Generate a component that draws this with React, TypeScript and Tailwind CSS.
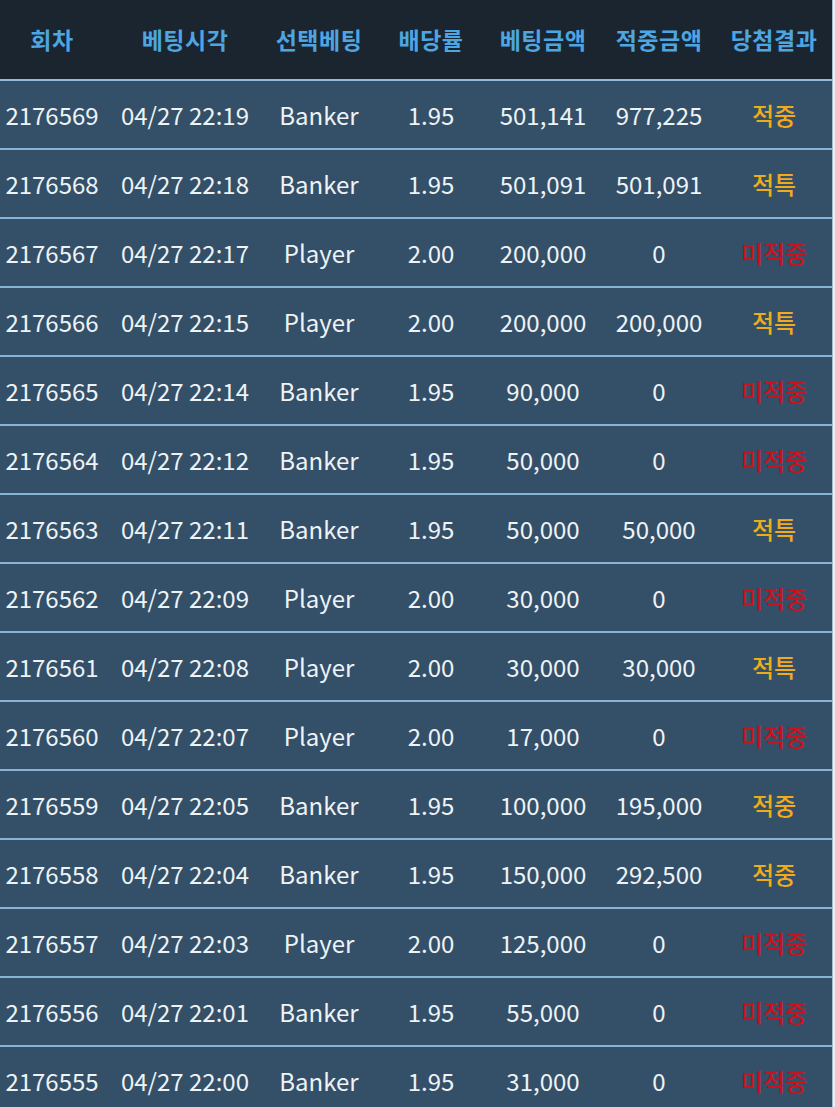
import React from 'react';

type Row = {
  round: string;
  time: string;
  pick: string;
  odds: string;
  bet: string;
  win: string;
  result: string;
};

const rows: Row[] = [
  { round: '2176569', time: '04/27 22:19', pick: 'Banker', odds: '1.95', bet: '501,141', win: '977,225', result: '적중' },
  { round: '2176568', time: '04/27 22:18', pick: 'Banker', odds: '1.95', bet: '501,091', win: '501,091', result: '적특' },
  { round: '2176567', time: '04/27 22:17', pick: 'Player', odds: '2.00', bet: '200,000', win: '0', result: '미적중' },
  { round: '2176566', time: '04/27 22:15', pick: 'Player', odds: '2.00', bet: '200,000', win: '200,000', result: '적특' },
  { round: '2176565', time: '04/27 22:14', pick: 'Banker', odds: '1.95', bet: '90,000', win: '0', result: '미적중' },
  { round: '2176564', time: '04/27 22:12', pick: 'Banker', odds: '1.95', bet: '50,000', win: '0', result: '미적중' },
  { round: '2176563', time: '04/27 22:11', pick: 'Banker', odds: '1.95', bet: '50,000', win: '50,000', result: '적특' },
  { round: '2176562', time: '04/27 22:09', pick: 'Player', odds: '2.00', bet: '30,000', win: '0', result: '미적중' },
  { round: '2176561', time: '04/27 22:08', pick: 'Player', odds: '2.00', bet: '30,000', win: '30,000', result: '적특' },
  { round: '2176560', time: '04/27 22:07', pick: 'Player', odds: '2.00', bet: '17,000', win: '0', result: '미적중' },
  { round: '2176559', time: '04/27 22:05', pick: 'Banker', odds: '1.95', bet: '100,000', win: '195,000', result: '적중' },
  { round: '2176558', time: '04/27 22:04', pick: 'Banker', odds: '1.95', bet: '150,000', win: '292,500', result: '적중' },
  { round: '2176557', time: '04/27 22:03', pick: 'Player', odds: '2.00', bet: '125,000', win: '0', result: '미적중' },
  { round: '2176556', time: '04/27 22:01', pick: 'Banker', odds: '1.95', bet: '55,000', win: '0', result: '미적중' },
  { round: '2176555', time: '04/27 22:00', pick: 'Banker', odds: '1.95', bet: '31,000', win: '0', result: '미적중' },
];

const headers = ['회차', '베팅시각', '선택베팅', '배당률', '베팅금액', '적중금액', '당첨결과'];
// column widths tuned so centers line up with the screenshot
const widths = ['w-[104px]', 'w-[162px]', 'w-[106px]', 'w-[118px]', 'w-[106px]', 'w-[126px]', 'w-[104px]'];

const App: React.FC = () => {
  return (
    <div
      className="w-[835px] h-[1107px] overflow-hidden bg-[#e9eef2]"
      style={{ fontFamily: '"Noto Sans CJK KR", "Noto Sans", sans-serif' }}
    >
      <div className="w-[833px] h-full border-r border-[#a9bccb] bg-[#345068]">
        <div className="flex h-[81px] items-center bg-[#1b2530] border-b-2 border-[#92bcdc]">
          {headers.map((h, i) => (
            <div key={h} className={`${widths[i]} text-center text-[23px] tracking-[0.5px] font-bold text-[#4da6e2] pb-[1px]`}>
              {h}
            </div>
          ))}
        </div>
        {rows.map(r => (
          <div key={r.round} className="flex h-[69px] items-center border-b-2 border-[#86b4d6] text-[24px] text-[#eef3f6]">
            <div className={`${widths[0]} text-center`}>{r.round}</div>
            <div className={`${widths[1]} text-center`}>{r.time}</div>
            <div className={`${widths[2]} text-center`}>{r.pick}</div>
            <div className={`${widths[3]} text-center`}>{r.odds}</div>
            <div className={`${widths[4]} text-center`}>{r.bet}</div>
            <div className={`${widths[5]} text-center`}>{r.win}</div>
            <div
              className={`${widths[6]} text-center text-[24px] font-medium ${r.result === '미적중' ? 'text-[#c8121e]' : 'text-[#f0ab1c]'}`}
            >
              {r.result}
            </div>
          </div>
        ))}
      </div>
    </div>
  );
};

export default App;
